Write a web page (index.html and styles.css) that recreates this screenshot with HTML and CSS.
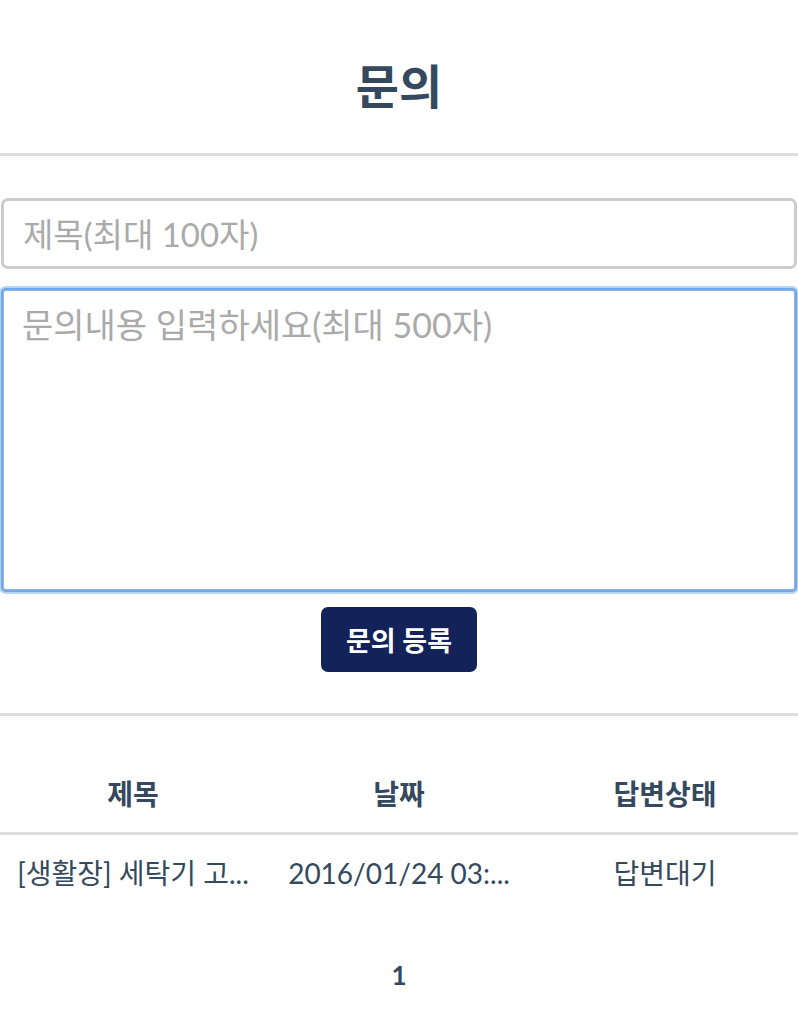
FILE: index.html
```html
<!DOCTYPE html>
<html lang="ko">
<head>
<meta charset="utf-8">
<title>문의</title>
<link rel="stylesheet" href="styles.css">
</head>
<body>
<header class="page-head">
  <h1 class="page-title">문의</h1>
</header>
<section class="form">
  <input class="field title-field" type="text" placeholder="제목(최대 100자)">
  <textarea class="field body-field" placeholder="문의내용 입력하세요(최대 500자)"></textarea>
  <div class="actions">
    <button class="submit" type="button">문의 등록</button>
  </div>
</section>
<section class="list">
  <table class="inq-table">
    <thead>
      <tr><th>제목</th><th>날짜</th><th>답변상태</th></tr>
    </thead>
    <tbody>
      <tr><td>[생활장] 세탁기 고...</td><td>2016/01/24 03:...</td><td>답변대기</td></tr>
    </tbody>
  </table>
  <div class="pager"><span class="page-num">1</span></div>
</section>
</body>
</html>
```
FILE: styles.css
```css
* { box-sizing: border-box; }
html, body { margin: 0; padding: 0; background: #fff; }
body {
  font-family: "Lato", "Noto Sans CJK KR", sans-serif;
  color: #34495e;
  width: 798px;
}
.page-head {
  height: 156px;
  border-bottom: 3px solid #ddd;
  display: flex;
  align-items: center;
  justify-content: center;
  padding-top: 20px;
}
.page-title {
  margin: 0;
  font-size: 47px;
  font-weight: 700;
  line-height: 1;
}
.form {
  padding: 42px 1px 41px;
  border-bottom: 3px solid #ddd;
}
.field {
  display: block;
  width: 100%;
  font-family: "Lato", "Noto Sans CJK KR", sans-serif;
  font-size: 33px;
  color: #34495e;
  background: #fff;
  outline: none;
}
.field::placeholder { color: #aaa; opacity: 1; }
.title-field {
  height: 71px;
  border: 3px solid #ccc;
  border-radius: 7px;
  padding: 0 19px;
}
.body-field {
  margin: 21px 2px 0;
  width: calc(100% - 4px);
  height: 300px;
  border: 1px solid #9ab6d6;
  border-radius: 3px;
  box-shadow: 0 0 0 2px #6da7ec, 0 0 0 4px #b4d3f7;
  padding: 12px 18px;
  resize: none;
  line-height: 1.3;
  font-size: 34px;
}
.actions {
  display: flex;
  justify-content: center;
  margin-top: 17px;
}
.submit {
  width: 156px;
  height: 65px;
  border: 0;
  border-radius: 7px;
  background: #13235a;
  color: #fff;
  font-family: "Lato", "Noto Sans CJK KR", sans-serif;
  font-size: 27px;
  font-weight: 600;
  padding: 0;
}
.list { padding-top: 40px; }
.inq-table {
  width: 100%;
  table-layout: fixed;
  border-collapse: collapse;
}
.inq-table th, .inq-table td {
  padding: 20px 6px;
  line-height: 36px;
  text-align: center;
  white-space: nowrap;
  overflow: hidden;
  text-overflow: ellipsis;
}
.inq-table th {
  font-size: 28px;
  font-weight: 700;
  border-bottom: 3px solid #ddd;
}
.inq-table td {
  font-size: 28px;
  font-weight: 400;
}
.pager {
  padding-top: 46px;
  text-align: center;
  line-height: 36px;
  font-size: 26px;
  font-weight: 700;
}
```
